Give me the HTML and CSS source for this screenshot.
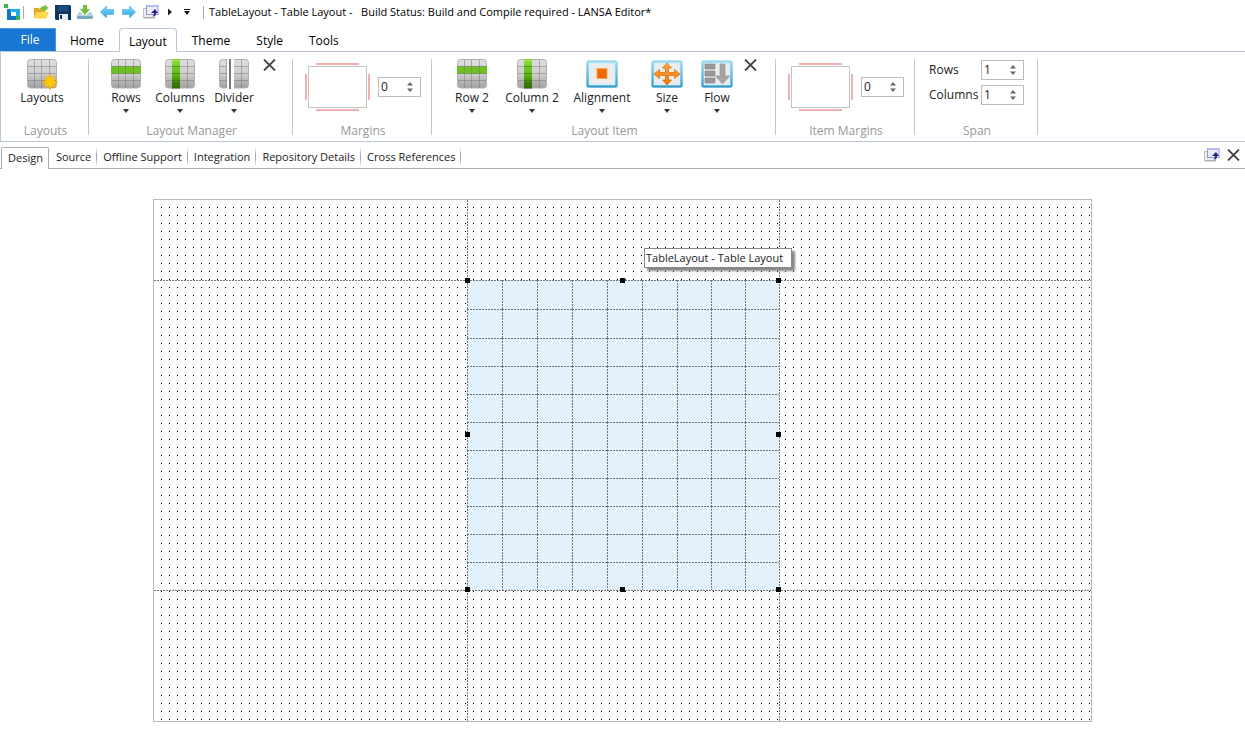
FILE: index.html
```
<!DOCTYPE html>
<html lang="en">
  <head>
    <meta charset="utf-8" />
    <title>TableLayout - LANSA Editor</title>
    <link rel="stylesheet" href="styles.css" />
  </head>
  <body>
    <!-- shared icon shapes -->
    <svg class="defs" width="0" height="0">
      <defs>
        <linearGradient id="gray" x1="0" y1="0" x2="0" y2="1">
          <stop offset="0" stop-color="#dedede" />
          <stop offset="0.5" stop-color="#cecece" />
          <stop offset="1" stop-color="#a0a0a0" />
        </linearGradient>
        <linearGradient id="green" x1="0" y1="0" x2="0" y2="1">
          <stop offset="0" stop-color="#93e33f" />
          <stop offset="0.55" stop-color="#5cb010" />
          <stop offset="1" stop-color="#2c6502" />
        </linearGradient>
        <linearGradient id="blue" x1="0" y1="0" x2="0" y2="1">
          <stop offset="0" stop-color="#9fd9ef" />
          <stop offset="1" stop-color="#3fa6d0" />
        </linearGradient>
        <linearGradient id="orange" x1="0" y1="0" x2="0" y2="1">
          <stop offset="0" stop-color="#ffa94a" />
          <stop offset="1" stop-color="#f07800" />
        </linearGradient>
        <linearGradient id="sky" x1="0" y1="0" x2="0" y2="1">
          <stop offset="0" stop-color="#8fdcff" />
          <stop offset="1" stop-color="#1e9be0" />
        </linearGradient>
        <symbol id="tile" viewBox="0 0 30 30">
          <rect x="0.5" y="0.5" width="29" height="28.5" rx="3" fill="url(#gray)" stroke="#b0b0b0" />
        </symbol>
        <symbol id="tilelines" viewBox="0 0 30 30">
          <path d="M7.5 1v28M14.5 1v28M22.5 1v28M1 7.5h28M1 14.5h28M1 21.5h28" stroke="#777" stroke-opacity="0.5" fill="none" />
        </symbol>
        <symbol id="frame" viewBox="0 0 32 28">
          <rect x="1.5" y="1.5" width="29" height="25" rx="1.5" fill="#ececec" stroke="url(#blue)" stroke-width="2.5" />
          <rect x="3.5" y="3.5" width="25" height="21" fill="none" stroke="#d2f0fb" />
          <path d="M1 26.500h30" stroke="#3a9cc6" />
        </symbol>
        <symbol id="cross" viewBox="0 0 13 12">
          <path d="M1 0.500L12 11.500M12 0.500L1 11.500" stroke="#444" stroke-width="1.800" fill="none" />
        </symbol>
        <symbol id="popout" viewBox="0 0 16 16">
          <rect x="0.5" y="4.5" width="11" height="9" fill="#ececec" stroke="#c0c0c0" />
          <path d="M1 14h11" stroke="#aaa" />
          <rect x="3.500" y="1.500" width="11.500" height="9" fill="#ececf8" stroke="#8f97ea" />
          <path d="M3.500 2h11.500" stroke="#b4bbf5" stroke-width="2" />
          <path d="M8 9l4-4 3 4h-2c0 2.500-1 3.500-3.500 3.500 1-1 1.500-2 1.500-3.500z" fill="#25257c" />
        </symbol>
        <symbol id="leftarrow" viewBox="0 0 16 16">
          <path d="M1.500 8l6-6v3.500h7v5h-7V14z" fill="url(#sky)" stroke="#5cb8e8" stroke-width="0.8" />
        </symbol>
        <symbol id="margins" viewBox="0 0 65 48">
          <rect x="3.500" y="3.500" width="58" height="41" fill="#fff" stroke="#c3c3c3" />
          <path d="M11 1h43M11 47h43M1 11v26M64 11v26" stroke="#f1b0b0" stroke-width="2" fill="none" />
        </symbol>
        <symbol id="updown" viewBox="0 0 6 10">
          <path d="M0 3.500h6L3 0zM0 6.500h6L3 10z" fill="#666" />
        </symbol>
      </defs>
    </svg>

    <header class="titlebar">
      <svg class="icon" viewBox="0 0 16 16">
        <path d="M3 5h4v7h5v4H3z" fill="#0e77c0" />
        <path d="M6 5h10v7h-4V8H6z" fill="#1fb0e8" />
        <path d="M0 0h4v4H0zM12 12h4v4h-4z" fill="#3bb54a" />
      </svg>
      <span class="divider"></span>
      <div class="quickbar">
        <button class="quick" aria-label="Open">
          <svg class="icon" viewBox="0 0 16 16">
            <path d="M1 4h5l1 2h5v8H1z" fill="#e0a818" />
            <path d="M3 8h13l-2.500 6.500H1z" fill="#ffd84e" />
            <path d="M7 6c0-3 2-4 4.500-4V0.500l4 3.500-4 3.500V6z" fill="#7cc142" />
          </svg>
        </button>
        <button class="quick" aria-label="Save">
          <svg class="icon" viewBox="0 0 16 16">
            <path d="M0 1h15l1 1v14H1l-1-1z" fill="#12355f" />
            <path d="M3 2h10v5H3z" fill="#1c4b82" />
            <path d="M4 10h9v6H4z" fill="#e9eef5" />
            <path d="M5 11h2v4H5z" fill="#12355f" />
          </svg>
        </button>
        <button class="quick" aria-label="Check in">
          <svg class="icon" viewBox="0 0 16 16">
            <path d="M2 8h2l2 3h4l2-3h2l2 3v3l-1 1H1l-1-1v-3z" fill="#b5d3df" />
            <path d="M0 12h16v2l-1 1H1l-1-1z" fill="#78a9bf" />
            <path d="M6 1h4v4h3l-5 6-5-6h3z" fill="#74bd3d" />
          </svg>
        </button>
        <button class="quick" aria-label="Back">
          <svg class="icon"><use href="#leftarrow" /></svg>
        </button>
        <button class="quick" aria-label="Forward">
          <svg class="icon flip"><use href="#leftarrow" /></svg>
        </button>
        <button class="quick" aria-label="Float window">
          <svg class="icon"><use href="#popout" /></svg>
        </button>
        <button class="quick small" aria-label="Run">
          <svg width="4" height="8" viewBox="0 0 4 8"><path d="M0 0.500l4 3.500-4 3.500z" fill="#222" /></svg>
        </button>
        <button class="quick small" aria-label="Customize">
          <svg width="6" height="6" viewBox="0 0 6 6"><path d="M0 0h6v1H0zM0 2h6L3 6z" fill="#111" /></svg>
        </button>
      </div>
      <span class="divider"></span>
      <span class="title">TableLayout - Table Layout - &nbsp; Build Status: Build and Compile required - LANSA Editor*</span>
    </header>

    <nav class="tabs">
      <button class="tab file">File</button>
      <button class="tab">Home</button>
      <button class="tab active">Layout</button>
      <button class="tab">Theme</button>
      <button class="tab">Style</button>
      <button class="tab">Tools</button>
    </nav>

    <section class="ribbon">
      <div class="group layouts">
        <div class="tools">
          <button class="tool">
            <svg class="toolicon" viewBox="0 0 30 30">
              <use href="#tile" /><use href="#tilelines" />
              <path d="M23 15l1.700 4.200 4-1.900-1.800 4 3.600 1.700-3.600 1.700 1.800 4-4-1.900L23 31l-1.700-4.200-4 1.900 1.800-4-4-1.700 4-1.700-1.800-4 4 1.900z" fill="#ffc800" stroke="#e9a800" stroke-width="0.5" />
            </svg>
            Layouts
          </button>
        </div>
        <div class="caption">Layouts</div>
      </div>

      <div class="group manager">
        <div class="tools">
          <button class="tool">
            <svg class="toolicon" viewBox="0 0 30 30">
              <use href="#tile" /><rect y="7" width="30" height="8" fill="#6fc021" /><use href="#tilelines" />
            </svg>
            Rows
            <span class="arrow"></span>
          </button>
          <button class="tool">
            <svg class="toolicon" viewBox="0 0 30 30">
              <use href="#tile" /><use href="#tilelines" /><rect x="7" width="8" height="29.500" fill="url(#green)" />
              <path d="M7 7.500h8M7 14.500h8M7 21.500h8" stroke="#357c05" stroke-opacity="0.6" />
            </svg>
            Columns
            <span class="arrow"></span>
          </button>
          <button class="tool">
            <svg class="toolicon" viewBox="0 0 30 30">
              <use href="#tile" /><use href="#tilelines" />
              <rect x="8" width="7" height="30" fill="#fff" /><rect x="10" width="2" height="30" fill="#777" />
            </svg>
            Divider
            <span class="arrow"></span>
          </button>
          <button class="close" aria-label="Remove layout manager"><svg width="13" height="12"><use href="#cross" /></svg></button>
        </div>
        <div class="caption">Layout Manager</div>
      </div>

      <div class="group margins">
        <div class="tools">
          <svg class="preview" width="65" height="48"><use href="#margins" /></svg>
          <span class="spinner">
            <input type="text" value="0" aria-label="Margins" />
            <svg width="6" height="10"><use href="#updown" /></svg>
          </span>
        </div>
        <div class="caption">Margins</div>
      </div>

      <div class="group item">
        <div class="tools">
          <button class="tool wide">
            <svg class="toolicon" viewBox="0 0 30 30">
              <use href="#tile" /><rect y="7" width="30" height="8" fill="#6fc021" /><use href="#tilelines" />
            </svg>
            Row 2
            <span class="arrow"></span>
          </button>
          <button class="tool wide">
            <svg class="toolicon" viewBox="0 0 30 30">
              <use href="#tile" /><use href="#tilelines" /><rect x="7" width="8" height="29.500" fill="url(#green)" />
              <path d="M7 7.500h8M7 14.500h8M7 21.500h8" stroke="#357c05" stroke-opacity="0.6" />
            </svg>
            Column 2
            <span class="arrow"></span>
          </button>
          <button class="tool wider">
            <svg class="toolicon frame" viewBox="0 0 32 30">
              <use href="#frame" width="32" height="28" y="1" />
              <rect x="11" y="9.500" width="10" height="10" fill="#f06a00" stroke="#f9a55a" />
            </svg>
            Alignment
            <span class="arrow"></span>
          </button>
          <button class="tool narrow">
            <svg class="toolicon frame" viewBox="0 0 32 30">
              <use href="#frame" width="32" height="28" y="1" />
              <path d="M16 4l4.500 5h-3v4.500h6v-3l5.500 4.500-5.500 4.500v-3h-6V21h3L16 26l-4.500-5h3v-4.500h-6v3L3 15l5.500-4.500v3h6V9h-3z" fill="url(#orange)" stroke="#e07010" stroke-width="0.8" />
            </svg>
            Size
            <span class="arrow"></span>
          </button>
          <button class="tool narrow">
            <svg class="toolicon frame" viewBox="0 0 32 30">
              <use href="#frame" width="32" height="28" y="1" />
              <path d="M4 5h10v5H4zM4 12h10v5H4zM4 19h10v5H4z" fill="#999" stroke="#858585" stroke-width="0.6" />
              <path d="M19 5h5v12h4.500l-7 8-7-8H19z" fill="#a5a5a5" stroke="#909090" stroke-width="0.6" />
            </svg>
            Flow
            <span class="arrow"></span>
          </button>
          <button class="close" aria-label="Remove layout item"><svg width="13" height="12"><use href="#cross" /></svg></button>
        </div>
        <div class="caption">Layout Item</div>
      </div>

      <div class="group margins">
        <div class="tools">
          <svg class="preview" width="65" height="48"><use href="#margins" /></svg>
          <span class="spinner">
            <input type="text" value="0" aria-label="Item margins" />
            <svg width="6" height="10"><use href="#updown" /></svg>
          </span>
        </div>
        <div class="caption">Item Margins</div>
      </div>

      <div class="group span">
        <div class="tools fields">
          <label for="spanrows">Rows</label>
          <span class="spinner">
            <input type="text" id="spanrows" value="1" />
            <svg width="6" height="10"><use href="#updown" /></svg>
          </span>
          <label for="spancolumns">Columns</label>
          <span class="spinner">
            <input type="text" id="spancolumns" value="1" />
            <svg width="6" height="10"><use href="#updown" /></svg>
          </span>
        </div>
        <div class="caption">Span</div>
      </div>
    </section>

    <nav class="doctabs">
      <button class="doctab current">Design</button>
      <button class="doctab">Source</button>
      <button class="doctab">Offline Support</button>
      <button class="doctab">Integration</button>
      <button class="doctab">Repository Details</button>
      <button class="doctab">Cross References</button>
      <div class="windowbuttons">
        <button class="quick" aria-label="Float"><svg class="icon"><use href="#popout" /></svg></button>
        <button class="quick" aria-label="Close"><svg width="13" height="12"><use href="#cross" /></svg></button>
      </div>
    </nav>

    <main class="surface">
      <div class="guide across top"></div>
      <div class="guide across bottom"></div>
      <div class="guide down left"></div>
      <div class="guide down right"></div>
      <div class="selected">
        <div class="cells" id="cells"></div>
        <span class="handle n w"></span>
        <span class="handle n"></span>
        <span class="handle n e"></span>
        <span class="handle w"></span>
        <span class="handle e"></span>
        <span class="handle s w"></span>
        <span class="handle s"></span>
        <span class="handle s e"></span>
        <div class="tooltip">TableLayout - Table Layout</div>
      </div>
    </main>

    <script>
      const cells = document.getElementById("cells");
      for (let i = 0; i < 9 * 11; i++) {
        const cell = document.createElement("div");
        cell.className = "cell";
        cells.appendChild(cell);
      }
    </script>
  </body>
</html>
```
FILE: styles.css
```
* {
  box-sizing: border-box;
}

body {
  margin: 0;
  background-color: #fff;
  color: #222;
  font-family: "Open Sans", "Noto Sans", sans-serif;
  font-size: 12px;
  line-height: 16px;
}

button,
input {
  font: inherit;
  color: inherit;
  background: none;
  border: none;
  padding: 0;
  margin: 0;
}

button {
  white-space: nowrap;
}

svg {
  display: block;
  flex: none;
}

.defs {
  position: absolute;
}

.icon {
  width: 16px;
  height: 16px;
}

.flip {
  transform: scaleX(-1);
}

/* title bar */

.titlebar {
  display: flex;
  align-items: center;
  height: 28px;
  padding: 0 4px 4px;
  color: #000;
}

.divider {
  width: 1px;
  height: 13px;
  margin: 0 5px 0 3px;
  background-color: #aaa;
}

.quickbar {
  display: flex;
  align-items: center;
  gap: 6px;
  padding: 0 7px 0 4px;
}

.quick {
  display: flex;
}

.small {
  padding: 0 3px;
}

.title {
  white-space: nowrap;
  font-size: 11px;
}

/* ribbon tabs */

.tabs {
  display: flex;
  height: 24px;
  margin-bottom: -1px;
  position: relative;
  color: #000;
}

.tab {
  padding: 2px 12px 0 14px;
}

.file {
  width: 56px;
  height: 23px;
  padding: 0 0 0 4px;
  color: #fff;
  background-color: #1976d2;
  border: 1px solid #4a98e6;
  border-color: #4a98e6 #4a98e6 #1976d2 #1976d2;
}

.active {
  padding: 2px 9px 0;
  margin: 0 1px 0 3px;
  background-color: #fff;
  border: 1px solid #b8c8da;
  border-bottom: none;
  border-radius: 4px 4px 0 0;
}

/* ribbon */

.ribbon {
  display: flex;
  height: 91px;
  padding: 7px 0 6px;
  border: 1px solid #b8c8da;
  border-right: none;
}

.group {
  display: flex;
  flex-direction: column;
  justify-content: space-between;
  border-right: 1px solid #b8c8da;
}

.layouts {
  width: 88px;
}

.manager {
  width: 204px;
}

.margins {
  width: 139px;
}

.item {
  width: 344px;
}

.span {
  width: 123px;
}

.tools {
  display: flex;
  padding-left: 10px;
}

.layouts .tools {
  padding-left: 14px;
}

.margins .tools {
  align-items: center;
  gap: 8px;
  padding: 4px 0 0 12px;
}

.caption {
  padding-left: 2px;
  text-align: center;
  color: #999;
  line-height: 8px;
}

.tool {
  display: flex;
  flex-direction: column;
  align-items: center;
  width: 54px;
}

.wide {
  width: 60px;
}

.wider {
  width: 80px;
}

.narrow {
  width: 50px;
}

.toolicon {
  width: 30px;
  height: 30px;
  margin-bottom: 1px;
  overflow: visible;
}

.frame {
  width: 32px;
}

.arrow {
  border: 3px solid transparent;
  border-top: 4px solid #333;
  border-bottom: none;
  margin-top: 3px;
}

.close {
  align-self: flex-start;
  padding-left: 2px;
}

.spinner {
  display: flex;
  align-items: center;
  width: 43px;
  height: 20px;
  padding: 0 7px 0 2px;
  border: 1px solid #bbb;
}

.spinner input {
  flex: 1;
  min-width: 0;
  outline: none;
}

.fields {
  display: grid;
  grid-template-columns: 52px 43px;
  align-items: center;
  row-gap: 5px;
  padding: 1px 0 0 14px;
}

/* editor tabs */

.doctabs {
  display: flex;
  align-items: flex-end;
  height: 27px;
  padding-left: 1px;
  border-bottom: 1px solid #aaa;
  font-size: 11px;
}

.doctab {
  height: 22px;
  padding: 0 5px 0 6px;
  border-right: 1px solid;
  border-image: linear-gradient(transparent 10%, #aaa 40%, #aaa 60%, transparent 90%) 1;
}

.current {
  padding: 0 5px 2px 6px;
  margin: 0 1px -1px 0;
  background-color: #fff;
  border: 1px solid #aaa;
  border-bottom: none;
  border-image: none;
  border-radius: 2px 2px 0 0;
}

.windowbuttons {
  display: flex;
  align-items: center;
  gap: 7px;
  height: 26px;
  margin-left: auto;
  padding-right: 5px;
}

/* design surface, dot every 8px */

.surface {
  display: grid;
  grid-template-columns: 313fr 312fr 312fr;
  grid-template-rows: 80px 310px 131px;
  position: relative;
  margin: 30px 153px 8px;
  border: 1px solid #bbb;
  background-image: linear-gradient(#fff 7px, transparent 7px),
    linear-gradient(90deg, #fff 7px, #000 7px);
  background-size: 8px 8px;
}

.guide.across {
  grid-column: 1 / -1;
  height: 1px;
  background: repeating-linear-gradient(90deg, #777 0 2px, #fff 2px 3px);
}

.guide.down {
  grid-row: 1 / -1;
  width: 1px;
  background: repeating-linear-gradient(#777 0 2px, #fff 2px 3px);
}

.guide.top {
  grid-row: 2;
}

.guide.bottom {
  grid-row: 3;
}

.guide.left {
  grid-column: 2;
}

.guide.right {
  grid-column: 3;
}

.selected {
  grid-area: 2 / 2;
  position: relative;
}

.cells {
  display: grid;
  grid-template-columns: repeat(6, 35fr) repeat(3, 34fr);
  grid-template-rows: repeat(2, 29px) repeat(9, 28px);
}

.cell {
  background: repeating-linear-gradient(90deg, #6f7880 0 2px, transparent 2px 3px) top / 100% 1px no-repeat,
    repeating-linear-gradient(#6f7880 0 2px, transparent 2px 3px) left / 1px 100% no-repeat,
    #e3f1fd;
}

.handle {
  position: absolute;
  left: calc(50% - 3px);
  top: calc(50% - 3px);
  width: 5px;
  height: 5px;
  background-color: #000;
}

.handle.n {
  top: -2px;
}

.handle.s {
  top: calc(100% - 3px);
}

.handle.w {
  left: -2px;
}

.handle.e {
  left: calc(100% - 3px);
}

.tooltip {
  position: absolute;
  left: 177px;
  top: -32px;
  height: 20px;
  padding: 1px 8px 0 1px;
  white-space: nowrap;
  font-size: 11px;
  background-color: #fff;
  border: 1px solid #888;
  box-shadow: 3px 3px 2px #888;
}
```
